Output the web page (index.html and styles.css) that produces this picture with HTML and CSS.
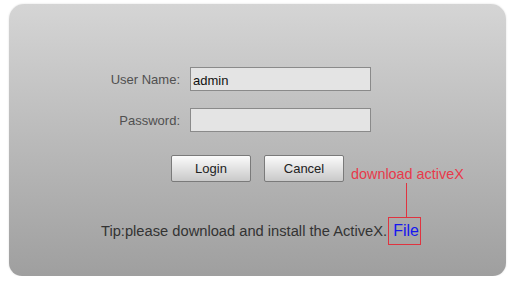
FILE: index.html
```html
<!DOCTYPE html>
<html lang="en">
<head>
    <meta charset="UTF-8">
    <title>Login</title>
    <link rel="stylesheet" href="styles.css">
</head>
<body>
    <div class="panel">
        <form class="login-form">
            <div class="form-row">
                <label class="form-label" for="username">User Name:</label>
                <input class="textbox" type="text" id="username" value="admin">
            </div>
            <div class="form-row">
                <label class="form-label" for="password">Password:</label>
                <input class="textbox" type="password" id="password">
            </div>
            <div class="button-row">
                <button type="button" class="button">Login</button>
                <button type="button" class="button">Cancel</button>
            </div>
            <div class="tip">
                Tip:please download and install the ActiveX. <a class="file-link" href="#">File</a>
            </div>
        </form>

        <!-- red callout drawn over the page -->
        <div class="callout-text">download activeX</div>
        <div class="callout-line"></div>
    </div>
</body>
</html>
```

FILE: styles.css
```css
body {
    margin: 0;
    background: #ffffff;
    font-family: "Liberation Sans", Arial, sans-serif;
}
.panel {
    position: relative;
    margin: 4px 8px 0 9px;
    height: 272px;
    border-radius: 15px 15px 13px 13px;
    background: linear-gradient(#d5d5d5, #bababa 50%, #9f9f9f);
    box-shadow: 0 0 2px rgba(0, 0, 0, 0.15);
}
.login-form {
    display: flex;
    flex-direction: column;
    padding-top: 63px;
}
.form-row {
    display: flex;
    align-items: center;
    margin-left: 81px;
    margin-bottom: 17px;
}
.form-label {
    width: 90px;
    margin-right: 10px;
    text-align: right;
    font-size: 13px;
    color: #505050;
}
.textbox {
    box-sizing: border-box;
    width: 181px;
    height: 24px;
    margin: 0;
    padding: 2px 2px 0;
    border: 1px solid #8a8a8a;
    background: #e4e4e4;
    font-family: "Liberation Sans", Arial, sans-serif;
    font-size: 13px;
    color: #111;
}
.button-row {
    display: flex;
    justify-content: center;
    gap: 13px;
    margin-top: 6px;
}
.button {
    box-sizing: border-box;
    width: 80px;
    height: 27px;
    border: 1px solid #7a7a7a;
    border-radius: 2px;
    background: linear-gradient(#fbfbfb, #e2e2e2 50%, #c9c9c9);
    font-family: "Liberation Sans", Arial, sans-serif;
    font-size: 13px;
    color: #222;
}
.tip {
    margin-top: 35px;
    margin-left: 92px;
    font-size: 14.7px;
    color: #333;
    white-space: nowrap;
}
.file-link {
    display: inline-block;
    padding: 4px 1px 4px 4px;
    margin-left: -3px;
    border: 1px solid #e0333f;
    font-size: 16px;
    color: #1616f0;
    text-decoration: none;
}
.callout-text {
    position: absolute;
    left: 342px;
    top: 162px;
    font-size: 14.4px;
    color: #e8394a;
}
.callout-line {
    position: absolute;
    left: 397px;
    top: 179px;
    width: 1px;
    height: 35px;
    background: #e0333f;
}
```
